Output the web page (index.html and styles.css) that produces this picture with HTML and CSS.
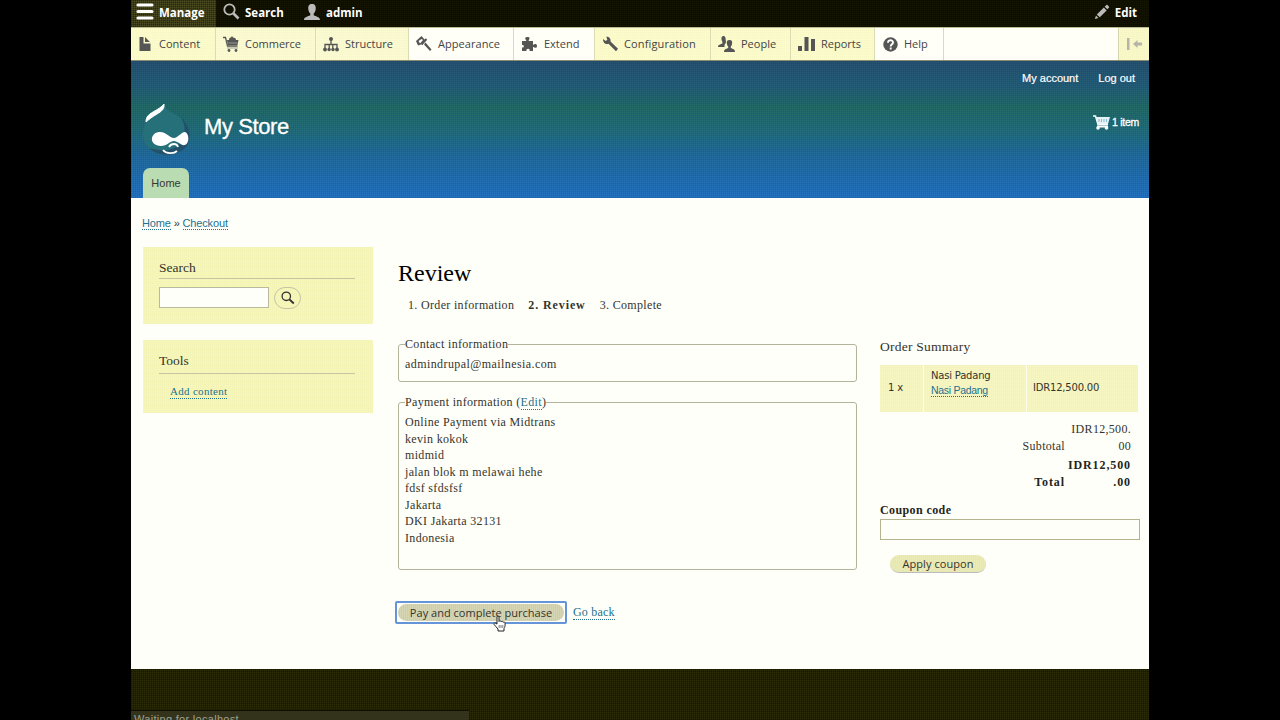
FILE: index.html
```html
<!DOCTYPE html>
<html lang="en">
<head>
<meta charset="utf-8">
<title>Review | My Store</title>
<link rel="stylesheet" href="styles.css">
</head>
<body>
<div class="page">
  <nav class="bar">
    <a class="bar-item bar-manage weave-dark"><svg class="ic" width="18" height="18" viewBox="0 0 18 18"><path d="M2 2h14M2 8.500h14M2 15h14" stroke="#fff" stroke-width="3.200" stroke-linecap="round"/></svg><span>Manage</span></a>
    <a class="bar-item bar-search"><svg class="ic" width="18" height="18" viewBox="0 0 18 18"><circle cx="6.500" cy="6.500" r="5.200" fill="none" stroke="#bbb" stroke-width="1.800"/><path d="M10.500 10.500l5 5" stroke="#bbb" stroke-width="2.600"/></svg><span>Search</span></a>
    <a class="bar-item bar-user"><svg class="ic" width="18" height="18" viewBox="0 0 18 18"><path d="M9 1C6 1 5 3 5.300 6c.2 2 1 3.500 2 4.500v1.800C5 13.500 1 14 1 17h16c0-3-4-3.500-6.300-4.700v-1.800c1-1 1.800-2.500 2-4.500C13 3 12 1 9 1z" fill="#bbb"/></svg><span>admin</span></a>
    <a class="bar-item bar-edit"><svg class="ic" width="18" height="18" viewBox="0 0 18 18"><path d="M1 17l1.200-4 2.800 2.800zM3.200 11.700L11 4l3.200 3.200-7.700 7.800zM12 3l2-2c.7-.7 3.700 2.400 3 3l-2 2z" fill="#bbb"/></svg><span>Edit</span></a>
  </nav>
  <nav class="tray">
    <a class="tab t1"><svg class="ic" width="16" height="16" viewBox="0 0 16 16"><path d="M2.500 1h4v6.500h7V15h-11zM8 1l5 5H8z"/></svg><span>Content</span></a>
    <a class="tab t2"><svg class="ic" width="16" height="16" viewBox="0 0 16 16"><path d="M0 1.500h2.500l2 8.500h10" fill="none" stroke="#555" stroke-width="1.300"/><path d="M4 4h2c0-2 1-2.500 2-2.500L9 0l1 1.500c2 0 3 1 3 2.500h2.500l-1 5H5z"/><path d="M4 12h11M5.500 7h9" stroke="#999"/><circle cx="6" cy="14.500" r="1.400"/><circle cx="13" cy="14.500" r="1.400"/></svg><span>Commerce</span></a>
    <a class="tab t3"><svg class="ic" width="16" height="16" viewBox="0 0 16 16"><path d="M2 12V8.500h12V12M6.200 12V8.500M9.800 12V8.500M8 4v4" fill="none" stroke="#555" stroke-width="1.300"/><circle cx="8" cy="3" r="2"/><circle cx="2" cy="13.500" r="1.900"/><circle cx="6.100" cy="13.500" r="1.700"/><circle cx="10" cy="13.500" r="1.700"/><circle cx="14" cy="13.500" r="1.900"/></svg><span>Structure</span></a>
    <a class="tab t4 light"><svg class="ic" width="16" height="16" viewBox="0 0 16 16"><path d="M5.500 0L0 5l2 4.500 3-1 4-4.500zM9.500 6.500l6 7-1.500 1.500-6-6.500z"/><path d="M5.500 8.500l5-5.500" stroke="#555" stroke-width="2"/><path d="M2.500 5l3-2 1.500 1-3 3.500z" fill="#fff"/></svg><span>Appearance</span></a>
    <a class="tab t5 light"><svg class="ic" width="17" height="16" viewBox="0 0 17 16"><path d="M1 5h4.500C3.500 2 4 1 6.500 1S9 2 7.500 5H12v4c1.500-1.500 4-1.500 4 1s-2.500 2.200-4 .8V15H8.500c1.300-3-4-3-3 0H1v-3.500c2.500.5 2.500-3 0-2.500z"/></svg><span>Extend</span></a>
    <a class="tab t6"><svg class="ic" width="17" height="16" viewBox="0 0 17 16"><path d="M1 3l2.800 2 1.500-1.200L4.300.8C7 .6 9 2.500 8.500 5.500l7.500 7.200-2 2.500-7.500-7.400C3.500 9 1 6.500 1 3z"/></svg><span>Configuration</span></a>
    <a class="tab t7"><svg class="ic" width="17" height="16" viewBox="0 0 17 16"><path d="M5.500 0C3.500 0 3.200 2 3.600 4l.8 2v1.500C2.500 8.500 0 8.500 0 11h6.500V9L8 6.500 7.500 2C7 .5 6.500 0 5.500 0z"/><path d="M11.500 4C9 4 8.600 5.500 8.900 7.500c.2 1.500.7 2.500 1.300 3.200v1.300C8 13 6 13 6 16h11c0-3-2-3-4.200-4v-1.300c.6-.7 1.100-1.700 1.300-3.200.3-2-.1-3.500-2.600-3.500z"/></svg><span>People</span></a>
    <a class="tab t8"><svg class="ic" width="17" height="16" viewBox="0 0 17 16"><path d="M0 10h4v5H0zM6.500 1h4v14h-4zM13 3h4v12h-4z"/></svg><span>Reports</span></a>
    <a class="tab t9 light"><svg class="ic" width="15" height="15" viewBox="0 0 16 16"><circle cx="8" cy="8" r="7.700"/><path d="M5.300 6c0-3.500 5.600-3.200 5.400 0C10.600 7.800 8.200 7.800 8.200 10M8.200 11.200v2" fill="none" stroke="#fff" stroke-width="2"/></svg><span>Help</span></a>
    <a class="pivot"><svg width="17" height="14" viewBox="0 0 17 14"><path d="M0 1h2.500v12H0zM6 7l4.500-4v2.500H15v3h-4.500V11z" fill="#b4b4a8"/></svg></a>
  </nav>
  <header class="header">
    <div class="account"><a>My account</a><a>Log out</a></div>
    <div class="brand">
      <svg class="logo" width="48" height="54" viewBox="0 0 48 54">
        <path d="M21 0c1 6 6 9 14 13 8 5 11 10 11 19 0 12-9 20-22 20S0 44 0 31C0 20 6 15 12 11c5-3 8-5 9-11z" fill="#26707a"/>
        <path d="M38 15c10 7 12 24 2 32-11 7-26 6-34-2 9 3 24 4 30-4 6-7 8-17 2-26z" fill="#23506a"/>
        <path d="M21 1c.5 5-2 7-7 10S5 17 3 19c0-5 2-7 7-10S19 4 21 1z" fill="#fff" stroke="#fff"/>
        <path d="M17 29c7 0 9 6 14 6 4 0 7-6 11-6 4 1 5 11 0 13-4 1-7-4-11-4s-7 5-13 5S8 39 9 35s4-6 8-6z" fill="#fff"/>
        <path d="M26 44c2-4 8-4 9 0M20 47c3 4 11 4 14 1" fill="none" stroke="#fff" stroke-width="1.800"/>
      </svg>
      <span class="site">My Store</span>
      <a class="cart"><svg width="17" height="15" viewBox="0 0 17 15"><path d="M0 1h2.500L5 9.500h10" fill="none" stroke="#fff" stroke-width="1.500"/><path d="M3 2h14l-2 7H5z" fill="#e4f2f6"/><path d="M6 4v3M8.500 4v3M11 4v3M13.500 4v3" stroke="#8fb9cd"/><path d="M4 11.500h11" stroke="#fff" stroke-width="2"/><circle cx="5" cy="13" r="1.800" fill="#fff"/><circle cx="13.500" cy="13" r="1.800" fill="#fff"/></svg><span>1 item</span></a>
    </div>
    <a class="home-tab">Home</a>
  </header>
  <main class="main">
    <div class="crumb"><a class="lk">Home</a> » <a class="lk">Checkout</a></div>
    <div class="cols">
      <aside class="side">
        <section class="block block-search">
          <h2>Search</h2>
          <div class="search-row"><span class="box"></span><span class="go"><svg width="14" height="14" viewBox="0 0 14 14"><circle cx="5.300" cy="5.300" r="4.200" fill="none" stroke="#333" stroke-width="1.300"/><path d="M8.500 8.500l4.300 4" stroke="#333" stroke-width="1.800"/></svg></span></div>
        </section>
        <section class="block block-tools">
          <h2>Tools</h2>
          <div class="tool"><a class="lk">Add content</a></div>
        </section>
      </aside>
      <section class="review">
        <h1>Review</h1>
        <div class="steps"><span>1. Order information</span><b>2. Review</b><span>3. Complete</span></div>
        <div class="fs fs-contact"><div class="legend"><span>Contact information</span></div><div class="line email">admindrupal@mailnesia.com</div></div>
        <div class="fs fs-pay"><div class="legend"><span>Payment information (<a class="lk">Edit</a>)</span></div>
          <div class="line">Online Payment via Midtrans</div><div class="line">kevin kokok</div><div class="line">midmid</div><div class="line">jalan blok m melawai hehe</div><div class="line">fdsf sfdsfsf</div><div class="line">Jakarta</div><div class="line">DKI Jakarta 32131</div><div class="line">Indonesia</div></div>
        <div class="actions"><span class="pay"><span class="pay-in">Pay and complete purchase</span>
          <svg class="hand" width="14" height="17" viewBox="0 0 14 17"><path d="M4 9V2c0-1.500 2-1.500 2 0v4.500c.5-1 2-.8 2.200.3.600-.8 1.900-.5 2 .5.700-.6 1.900-.2 1.900.900 0 3-.100 4-1.100 5.300V16H5v-2C4 12.500 2 11 1 9.300.5 8 2 7.500 3 8.500z" fill="#fff" stroke="#222" stroke-width="1"/><path d="M6.200 10v3M8 10v3M9.800 10v3" stroke="#444" stroke-width=".7"/></svg></span><a class="lk back">Go back</a></div>
      </section>
      <aside class="order">
        <h3>Order Summary</h3>
        <div class="items"><div class="qty">1 x</div><div class="prod"><span>Nasi Padang</span><span><a class="lk np">Nasi Padang</a></span></div><div class="price">IDR12,500.00</div></div>
        <div class="sum"><span class="lab">Subtotal</span><span class="val">IDR12,500.<br>00</span></div>
        <div class="sum total"><span class="lab">Total</span><span class="val">IDR12,500<br>.00</span></div>
        <label class="coupon">Coupon code</label>
        <div class="coupon-box"></div>
        <span class="apply">Apply coupon</span>
      </aside>
    </div>
  </main>
  <footer class="footer weave-dark"><div class="status">Waiting for localhost...</div></footer>
</div>
</body>
</html>
```
FILE: styles.css
```css
* { box-sizing: border-box; }
html, body { margin: 0; height: 720px; overflow: hidden; background: #000; }
body { font-family: "Liberation Serif", serif; color: #34342c; font-size: 12px; }
h1, h2, h3 { margin: 0; font-weight: 400; }
.page { width: 1018px; height: 720px; margin-left: 131px; display: flex; flex-direction: column; overflow: hidden; }
.ic { flex: none; }

/* one-pixel woven textures */
.block, .items, .apply, .tab, .pivot, .pay-in {
  background-image: linear-gradient(90deg, rgba(255,255,255,.14) 1px, transparent 1px), linear-gradient(rgba(220,220,210,.14) 1px, transparent 1px);
  background-size: 2px 2px;
}
.weave-dark, .bar {
  background-image: linear-gradient(90deg, rgba(0,0,0,.25) 1px, transparent 1px), linear-gradient(rgba(0,0,0,.25) 1px, transparent 1px);
  background-size: 2px 2px;
}

.bar { height: 27px; flex: none; display: flex; background-color: #161602; font: bold 11.500px/25px "Open Sans", sans-serif; color: #fff; }
.bar-item { display: flex; align-items: flex-start; gap: 5px; }
.bar-item .ic { margin-top: 3px; }
.bar-manage { width: 85px; padding-left: 5px; background-color: #4c4c22; }
.bar-search { width: 83px; padding-left: 7px; gap: 4px; }
.bar-user { padding-left: 4px; gap: 5px; }
.bar-edit { margin-left: auto; padding-right: 12px; gap: 5px; }
.bar-edit .ic { width: 16px; }

.tray { height: 34px; flex: none; display: flex; border-top: 1px solid #bdbd90; border-bottom: 1px solid #8c8c70; background: #fffff8; font: 11px/32px "Open Sans", sans-serif; color: #444; }
.tab { height: 32px; display: flex; align-items: center; border-right: 1px solid #dcdcb4; background-color: #fbfbc8; fill: #555; white-space: nowrap; }
.tab.light { background: #fffff8; }
.tab .ic { margin-left: 7px; margin-right: 6px; }
.t1 { width: 85px; } .t1 .ic { margin-left: 6px; }
.t2 { width: 100px; } .t3 { width: 93px; } .t4 { width: 105px; }
.t5 { width: 81px; } .t6 { width: 116px; } .t7 { width: 80px; } .t8 { width: 84px; } .t9 { width: 69px; }
.t6 .ic { margin-right: 5px; }
.t6 { letter-spacing: .13px; }
.t4 { letter-spacing: .05px; }
.t9 .ic { margin-left: 8px; }
.pivot { margin-left: auto; width: 31px; border-left: 1px solid #d6d6ae; display: flex; align-items: center; padding-left: 8px; background-color: #f8f8c4; }

.header { height: 137px; flex: none; display: flex; flex-direction: column;
  background: linear-gradient(90deg, rgba(0,20,110,.1) 1px, transparent 1px) 0 0 / 2px 2px, linear-gradient(rgba(0,20,110,.1) 1px, transparent 1px) 0 0 / 2px 2px, linear-gradient(#28546f 0, #256077 18%, #246d66 34%, #24707c 52%, #246e9c 68%, #2472b0 84%, #2676c2 100%);
  color: #fff; font-family: "Liberation Sans", sans-serif; }
.account { display: flex; justify-content: flex-end; gap: 20px; height: 34px; padding-right: 14px; font-size: 11px; line-height: 34px; -webkit-text-stroke: .2px #fff; }
.brand { height: 73px; display: flex; padding-left: 12px; }
.logo { margin-top: 8px; }
.site { font-size: 22px; line-height: 64px; margin-left: 13px; letter-spacing: -.4px; -webkit-text-stroke: .3px #fff; }
.cart { margin-left: auto; padding-right: 10px; display: flex; gap: 2px; align-items: flex-start; font-size: 10.500px; line-height: 55px; letter-spacing: -.25px; -webkit-text-stroke: .3px #fff; }
.cart svg { margin-top: 20px; }
.home-tab { align-self: flex-start; margin-left: 12px; width: 46px; height: 30px; border-radius: 7px 7px 0 0; background: #b9dcb2; color: #383830; font-size: 11px; line-height: 31px; text-align: center; }

.main { height: 471px; flex: none; background: #fffffa; }
.lk { color: #22718f; border-bottom: 1px dotted #22718f; }
.crumb { height: 49px; padding: 19px 0 0 11px; font: 11px/13px "Liberation Sans", sans-serif; letter-spacing: -.15px; }
.crumb .lk { display: inline-block; height: 13px; }
.cols { display: flex; }
.side { width: 230px; margin-left: 12px; display: flex; flex-direction: column; gap: 16px; }
.block { background-color: #f6f6b4; padding: 12px 18px 0 16px; }
.block h2 { font-size: 13.500px; line-height: 17px; height: 20px; border-bottom: 1px solid #c6c6a0; }
.block-search { height: 77px; }
.block-tools { height: 73px; }
.search-row { display: flex; gap: 5px; margin-top: 8px; }
.box { width: 110px; height: 21px; background: #fffffa; border: 1px solid #b9b9a0; }
.go { width: 27px; height: 22px; border: 1px solid #c4c4a4; border-radius: 11px; display: flex; align-items: center; justify-content: center; }
.tool { margin: 12px 0 0 11px; line-height: 14px; font-size: 11px; letter-spacing: .3px; }
.tool .lk { display: inline-block; }
.block-tools h2 { height: 22px; }
.block-tools .tool { margin-top: 10px; }

.review { width: 459px; margin-left: 25px; letter-spacing: .33px; }
h1 { font-size: 24px; line-height: 28px; color: #000; padding-top: 12px; letter-spacing: 0; }
.steps { display: flex; gap: 14px; height: 57px; padding: 10px 0 0 10px; line-height: 17px; }
.steps b { letter-spacing: .9px; }
.fs { border: 1px solid #b4b49c; border-radius: 3px; padding-left: 6px; }
.legend { height: 16px; margin-top: -9px; line-height: 16px; }
.legend > span { background: #fffffa; display: inline-block; }
.legend .lk { display: inline-block; height: 16px; }
.fs-contact { height: 38px; margin-bottom: 20px; }
.fs-pay { height: 168px; }
.fs .line { line-height: 16.550px; }
.legend + .line { margin-top: 4px; }
.email { letter-spacing: .42px; }
.actions { display: flex; margin: 31px 0 0 -3px; }
.pay { position: relative; width: 172px; height: 23px; border: 2px solid #6694d8; border-radius: 2px; padding: 1px; background: #fffffa; }
.pay-in { display: block; height: 17px; border-radius: 9px; background-color: #cdcda4; font: 11px/17px "Open Sans", sans-serif; letter-spacing: 0.02px; text-align: center; white-space: nowrap; }
.hand { position: absolute; left: 96px; top: 12px; }
.back { margin: 4px 0 0 6px; height: 15px; line-height: 15px; letter-spacing: .2px; }

.order { width: 260px; margin-left: 23px; padding-top: 91px; }
h3 { font-size: 13.500px; line-height: 18px; letter-spacing: .25px; }
.items { display: flex; width: 258px; height: 47px; margin-top: 9px; background-color: #f6f6b4; font: 10px/15px "DejaVu Sans", sans-serif; letter-spacing: -.2px; }
.items > div { border-right: 1px solid #fffff0; }
.items .qty { width: 44px; padding: 15px 0 0 8px; }
.items .prod { width: 103px; padding: 3px 0 0 7px; display: flex; flex-direction: column; }
.items .price { flex: 1; padding: 15px 0 0 6px; border: 0; }
.np { display: inline-block; height: 14px; font: 10.500px/14px "Liberation Sans", sans-serif; letter-spacing: -.3px; }
.sum { display: flex; justify-content: flex-end; align-items: flex-end; height: 33px; width: 251px; margin-top: 9px; line-height: 16.500px; letter-spacing: .3px; }
.sum .val { width: 66px; text-align: right; white-space: nowrap; }
.total { font-weight: bold; margin-top: 3px; color: #24241c; letter-spacing: .9px; }
.coupon { display: block; font-weight: bold; line-height: 16px; margin-top: 12px; color: #24241c; letter-spacing: .4px; }
.coupon-box { height: 21px; margin-top: 1px; border: 1px solid #b4b490; background: #fffffa; }
.apply { display: block; width: 96px; height: 18px; margin: 15px 0 0 10px; border-radius: 9px; border-bottom: 1px solid #bbb; background-color: #e8e8a8; font: 11px/18px "Open Sans", sans-serif; letter-spacing: .05px; text-align: center; }

.footer { flex: 1; background-color: #2c2c06; padding-top: 41px; overflow: hidden; }
.status { width: 338px; height: 20px; border-top: 1px solid #111100; background: #33331c; color: #a0a08c; font: 11px/17px "Liberation Sans", sans-serif; letter-spacing: .3px; padding-left: 3px; }
```
